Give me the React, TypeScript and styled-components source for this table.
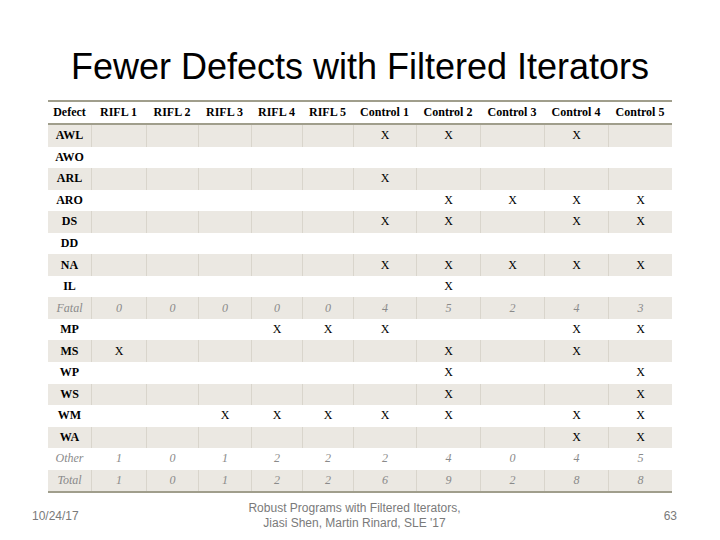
import * as React from 'react';
import styled, { createGlobalStyle } from 'styled-components';

const GlobalStyle = createGlobalStyle`
  html, body {
    margin: 0;
    padding: 0;
    background: #ffffff;
  }
`;

const COLS = '43px 55px 52px 53px 51px 51px 63px 64px 64px 64px 64px';
const HEADERS = ['Defect', 'RIFL 1', 'RIFL 2', 'RIFL 3', 'RIFL 4', 'RIFL 5', 'Control 1', 'Control 2', 'Control 3', 'Control 4', 'Control 5'];

type RowData = {
  label: string;
  marks?: number[];
  values?: number[];
};

// marks: column indexes (0 = RIFL 1 ... 9 = Control 5) that hold an X
const ROWS: RowData[] = [
  { label: 'AWL', marks: [5, 6, 8] },
  { label: 'AWO', marks: [] },
  { label: 'ARL', marks: [5] },
  { label: 'ARO', marks: [6, 7, 8, 9] },
  { label: 'DS', marks: [5, 6, 8, 9] },
  { label: 'DD', marks: [] },
  { label: 'NA', marks: [5, 6, 7, 8, 9] },
  { label: 'IL', marks: [6] },
  { label: 'Fatal', values: [0, 0, 0, 0, 0, 4, 5, 2, 4, 3] },
  { label: 'MP', marks: [3, 4, 5, 8, 9] },
  { label: 'MS', marks: [0, 6, 8] },
  { label: 'WP', marks: [6, 9] },
  { label: 'WS', marks: [6, 9] },
  { label: 'WM', marks: [2, 3, 4, 5, 6, 8, 9] },
  { label: 'WA', marks: [8, 9] },
  { label: 'Other', values: [1, 0, 1, 2, 2, 2, 4, 0, 4, 5] },
  { label: 'Total', values: [1, 0, 1, 2, 2, 6, 9, 2, 8, 8] },
];

const Slide = styled.div`
  width: 720px;
  height: 540px;
  display: flex;
  flex-direction: column;
  overflow: hidden;
  font-family: 'Liberation Serif', serif;
`;

const Title = styled.h1`
  margin: 47px 0 0;
  height: 40px;
  line-height: 40px;
  text-align: center;
  font-family: 'Liberation Sans', Arial, sans-serif;
  font-weight: normal;
  font-size: 36px;
  color: #000;
`;

const Table = styled.div`
  margin: 13px 0 0 48px;
  width: 624px;
  border-top: 2px solid #a09e8c;
  border-bottom: 2px solid #a09e8c;
`;

const HeaderRow = styled.div`
  display: grid;
  grid-template-columns: ${COLS};
  height: 21px;
  border-bottom: 2px solid #a09e8c;
`;

const HeaderCell = styled.div`
  display: flex;
  align-items: center;
  justify-content: center;
  font-weight: bold;
  font-size: 12px;
  color: #000;
  white-space: nowrap;
`;

const Row = styled.div<{ $shaded: boolean }>`
  display: grid;
  grid-template-columns: ${COLS};
  height: 21.55px;
  background: ${(p) => (p.$shaded ? '#ebe8e2' : '#ffffff')};
`;

const Cell = styled.div<{ $shaded: boolean; $first?: boolean; $muted?: boolean }>`
  display: flex;
  align-items: center;
  justify-content: center;
  border-left: ${(p) => (p.$first ? 'none' : `1px solid ${p.$shaded ? '#d9d5cc' : 'transparent'}`)};
  font-size: 12px;
  font-style: ${(p) => (p.$muted ? 'italic' : 'normal')};
  font-weight: ${(p) => (p.$first && !p.$muted ? 'bold' : 'normal')};
  color: ${(p) => (p.$muted ? '#8a8a8a' : '#000')};
`;

const Footer = styled.div`
  display: grid;
  grid-template-columns: 1fr auto 1fr;
  align-items: center;
  margin-top: 8px;
  padding: 0 43px 0 32px;
  font-family: 'Liberation Sans', Arial, sans-serif;
  font-size: 12px;
  color: #7a7a7a;
`;

const FooterDate = styled.div`
  justify-self: start;
`;

const FooterCenter = styled.div`
  text-align: center;
  line-height: 15px;
`;

const FooterPage = styled.div`
  justify-self: end;
`;

export default function App() {
  return (
    <Slide>
      <GlobalStyle />
      <Title>Fewer Defects with Filtered Iterators</Title>
      <Table>
        <HeaderRow>
          {HEADERS.map((h) => (
            <HeaderCell key={h}>{h}</HeaderCell>
          ))}
        </HeaderRow>
        {ROWS.map((row, i) => {
          const shaded = i % 2 === 0;
          const muted = !!row.values;
          return (
            <Row key={row.label} $shaded={shaded}>
              <Cell $shaded={shaded} $first $muted={muted}>
                {row.label}
              </Cell>
              {Array.from({ length: 10 }, (_, c) => (
                <Cell key={c} $shaded={shaded} $muted={muted}>
                  {row.values ? row.values[c] : row.marks?.includes(c) ? 'X' : null}
                </Cell>
              ))}
            </Row>
          );
        })}
      </Table>
      <Footer>
        <FooterDate>10/24/17</FooterDate>
        <FooterCenter>
          Robust Programs with Filtered Iterators,
          <br />
          Jiasi Shen, Martin Rinard, SLE '17
        </FooterCenter>
        <FooterPage>63</FooterPage>
      </Footer>
    </Slide>
  );
}
